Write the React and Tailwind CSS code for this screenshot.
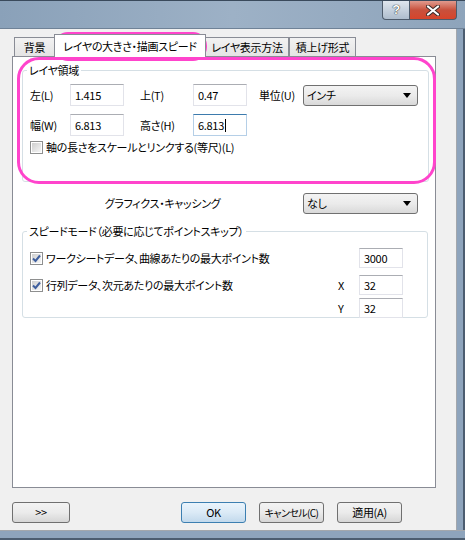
import React from 'react';

// Small Win7-style controls used throughout the layer properties dialog
const TextBox = ({ value, w = 'w-[54px]', h = 'h-[22px]', focused = false }) => (
  <div
    className={`${w} ${h} flex items-center bg-white pl-[4px] border ${
      focused
        ? 'border-[#b5cfe7] border-t-[#3d7bad]'
        : 'border-[#e2e3ea] border-t-[#abadb3]'
    }`}
  >
    <span className="leading-none">{value}</span>
    {focused && <span className="w-px h-[13px] bg-black ml-[1px]" />}
  </div>
);

const Dropdown = ({ value }) => (
  <div className="w-[115px] h-[21px] flex items-center justify-between rounded-[3px] border border-[#707070] bg-linear-to-b from-[#f3f3f3] via-[#ebebeb] to-[#d9d9d9] pl-[3px] pr-[6px]">
    <span className="leading-none">{value}</span>
    <svg width="8" height="5" viewBox="0 0 8 5">
      <path d="M0 0 H8 L4 5 Z" fill="#000" />
    </svg>
  </div>
);

const CheckBox = ({ checked = false }) => (
  <div className="w-[13px] h-[13px] shrink-0 border border-[#8e8f8f] bg-white p-px">
    <div className="w-full h-full bg-linear-to-br from-[#cfcfcf] to-[#f6f6f6] flex items-center justify-center">
      {checked && (
        <svg width="9" height="9" viewBox="0 0 9 9">
          <path d="M1 4.5 L3.5 7 L8 1.5" fill="none" stroke="#3f5f9e" strokeWidth="2" />
        </svg>
      )}
    </div>
  </div>
);

const Button = ({ children, primary = false }) => (
  <div
    className={`w-[65px] h-[21px] flex items-center justify-center rounded-[3px] border ${
      primary
        ? 'border-[#3c7fb1] bg-linear-to-b from-[#eaf4fc] via-[#dbeaf6] to-[#c2d9ec]'
        : 'border-[#707070] bg-linear-to-b from-[#f3f3f3] via-[#ebebeb] to-[#d6d6d6]'
    }`}
  >
    {children}
  </div>
);

const Tab = ({ label, w, active = false }) => (
  <div
    className={`${w} flex items-center justify-center border border-b-0 border-[#898c95] ${
      active
        ? 'h-[23px] bg-white relative z-10 -mb-px -mx-[1px]'
        : 'h-[19px] bg-linear-to-b from-[#f2f2f2] to-[#e4e4e4]'
    }`}
  >
    {label}
  </div>
);

export default function App() {
  return (
    <div className="w-[465px] h-[540px] relative overflow-hidden whitespace-nowrap bg-[#f0f0f0] text-[11px] tracking-[-0.3px] text-black font-['Noto_Sans_CJK_JP',sans-serif] [font-feature-settings:'palt']">
      {/* title bar */}
      <div className="h-[29px] relative border-t border-[#3a4a5c] border-b border-b-[#6f8297] bg-linear-to-r from-[#8aa1b9] via-[#9db1c6] to-[#8ea4bb]">
        <div className="absolute right-[8px] top-0 flex">
          <div className="w-[28px] h-[19px] flex items-center justify-center rounded-bl-[4px] border border-t-0 border-[#4d5b6b] bg-linear-to-b from-[#dfe6ee] to-[#aebdcd] text-white font-bold text-[13px] font-['Liberation_Sans',sans-serif] [text-shadow:0_0_1px_#222,0_0_1px_#222]">
            ?
          </div>
          <div className="w-[47px] h-[19px] flex items-center justify-center rounded-br-[4px] border border-t-0 border-l-0 border-[#4d5b6b] bg-linear-to-b from-[#e09a8e] via-[#c8503c] to-[#d7442a]">
            <svg width="14" height="11" viewBox="0 0 14 11">
              <path d="M2 1.5 L12 9.5 M12 1.5 L2 9.5" stroke="#3a2a28" strokeWidth="4" strokeLinecap="round" />
              <path d="M2 1.5 L12 9.5 M12 1.5 L2 9.5" stroke="#fff" strokeWidth="2.2" strokeLinecap="round" />
            </svg>
          </div>
        </div>
      </div>

      <div className="flex h-[501px]">
        {/* client area */}
        <div className="flex-1 flex flex-col">
          <div className="flex items-end pl-[14px] pt-[5px]">
            <Tab label="背景" w="w-[41px]" />
            <Tab label="レイヤの大きさ・描画スピード" w="w-[152px]" active />
            <Tab label="レイヤ表示方法" w="w-[84px]" />
            <Tab label="積上げ形式" w="w-[67px]" />
          </div>

          <div className="ml-[12px] w-[424px] h-[432px] bg-white border border-[#898c95] pl-[9px] pt-[5px] flex flex-col">
            <fieldset className="w-[407px] h-[120px] border border-[#d5dfe5] rounded-[3px] m-0 p-0 pl-[7px]">
              <legend className="-ml-[3px] px-[2px] leading-[16px]">レイヤ領域</legend>
              <div className="flex items-center mt-[6px]">
                <span className="w-[40px]">左(L)</span>
                <TextBox value="1.415" />
                <span className="ml-[16px] w-[53px]">上(T)</span>
                <TextBox value="0.47" />
                <span className="ml-[12px] w-[44px]">単位(U)</span>
                <Dropdown value="インチ" />
              </div>
              <div className="flex items-center mt-[8px]">
                <span className="w-[40px]">幅(W)</span>
                <TextBox value="6.813" />
                <span className="ml-[16px] w-[53px]">高さ(H)</span>
                <TextBox value="6.813" focused />
              </div>
              <div className="flex items-center mt-[5px] gap-[3px]">
                <CheckBox />
                <span className="leading-[13px]">軸の長さをスケールとリンクする(等尺)(L)</span>
              </div>
            </fieldset>

            <div className="flex items-center mt-[11px]">
              <span className="w-[281px] text-center">グラフィクス・キャッシング</span>
              <Dropdown value="なし" />
            </div>

            <fieldset className="w-[406px] h-[95px] border border-[#d5dfe5] rounded-[3px] m-0 p-0 pl-[7px] pr-[24px] mt-[9px]">
              <legend className="-ml-[3px] px-[2px] leading-[16px]">スピードモード（必要に応じてポイントスキップ）</legend>
              <div className="flex items-center mt-[9px]">
                <div className="flex-1 flex items-center gap-[3px]">
                  <CheckBox checked />
                  <span>ワークシートデータ、曲線あたりの最大ポイント数</span>
                </div>
                <TextBox value="3000" w="w-[44px]" h="h-[20px]" />
              </div>
              <div className="flex items-center mt-[7px]">
                <div className="flex-1 flex items-center gap-[3px]">
                  <CheckBox checked />
                  <span>行列データ、次元あたりの最大ポイント数</span>
                </div>
                <span className="w-[21px]">X</span>
                <TextBox value="32" w="w-[44px]" h="h-[20px]" />
              </div>
              <div className="flex items-center justify-end mt-[3px]">
                <span className="w-[21px]">Y</span>
                <TextBox value="32" w="w-[44px]" h="h-[20px]" />
              </div>
            </fieldset>
          </div>

          <div className="flex items-center mt-[14px] pl-[12px]">
            <div className="w-[58px] h-[21px] flex items-center justify-center rounded-[3px] border border-[#707070] bg-linear-to-b from-[#f3f3f3] via-[#ebebeb] to-[#d6d6d6]">
              &gt;&gt;
            </div>
            <div className="ml-[111px] flex gap-[13px]">
              <Button primary>OK</Button>
              <Button>
                <span className="text-[10px] tracking-[-0.6px]">キャンセル(C)</span>
              </Button>
              <Button>適用(A)</Button>
            </div>
          </div>
        </div>

        {/* right window frame */}
        <div className="w-[9px] border-l border-[#a3a7ac] bg-[#8ea4bc] border-r-2 border-r-[#4c5d70]" />
      </div>

      {/* bottom window frame */}
      <div className="h-[10px] border-t border-[#a3a7ac] bg-[#8ea4bc] border-b-2 border-b-[#4c5d70]" />

      {/* pink highlight marks */}
      <div className="absolute left-[54px] top-[32px] w-[153px] h-[29px] rounded-[14px] border-[3px] border-[#ff44cc] pointer-events-none" />
      <div className="absolute left-[17px] top-[57px] w-[419px] h-[127px] rounded-[22px] border-[3px] border-[#ff44cc] pointer-events-none" />
    </div>
  );
}
